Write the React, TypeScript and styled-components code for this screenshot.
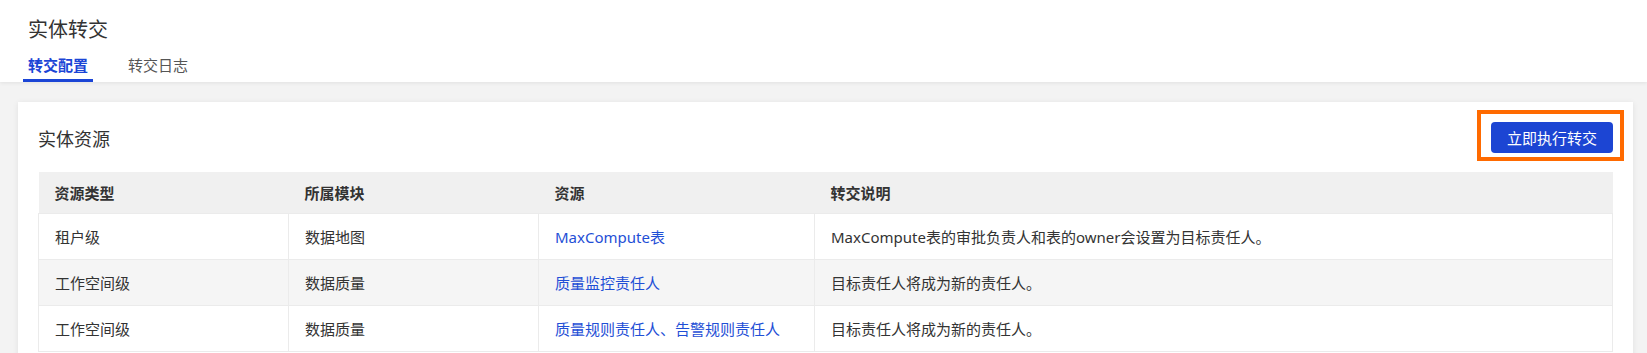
import React from "react";
import styled, { createGlobalStyle } from "styled-components";

const GlobalStyle = createGlobalStyle`
  html, body {
    margin: 0;
    padding: 0;
    background: #f3f3f3;
    font-family: "Noto Sans", "Noto Sans CJK SC", sans-serif;
    color: #333;
  }
`;

const PageHeader = styled.div`
  background: #fff;
  padding: 16px 0 0 23px;
  box-shadow: 0 1px 4px rgba(0, 0, 0, 0.08);
  position: relative;
  z-index: 1;
`;

const PageTitle = styled.div`
  font-size: 20px;
  line-height: 28px;
  padding-left: 5px;
  color: #333;
`;

const Tabs = styled.div`
  display: flex;
  gap: 30px;
`;

const Tab = styled.div<{ $active?: boolean }>`
  padding: 10px 5px 3px;
  font-size: 15px;
  line-height: 22px;
  font-weight: ${(p) => (p.$active ? 600 : 400)};
  color: ${(p) => (p.$active ? "#1b45d6" : "#555")};
  border-bottom: 3px solid ${(p) => (p.$active ? "#1b45d6" : "transparent")};
  cursor: pointer;
`;

const Main = styled.div`
  padding: 20px 14px 0 18px;
`;

const Card = styled.div`
  background: #fff;
  padding: 20px;
  box-shadow: 0 1px 6px rgba(0, 0, 0, 0.08);
`;

const CardHead = styled.div`
  display: flex;
  align-items: center;
  justify-content: space-between;
  height: 31px;
  margin-bottom: 19px;
`;

const CardTitle = styled.div`
  font-size: 18px;
  color: #333;
`;

const ButtonWrap = styled.div`
  position: relative;
`;

// orange annotation frame drawn over the button
const Highlight = styled.div`
  position: absolute;
  left: -14px;
  right: -11px;
  top: -12px;
  bottom: -8px;
  border: 4px solid #ff6a00;
  pointer-events: none;
`;

const PrimaryButton = styled.button`
  display: block;
  width: 122px;
  height: 31px;
  border: none;
  border-radius: 4px;
  background: #1c45d3;
  color: #fff;
  font-family: inherit;
  font-size: 15px;
  cursor: pointer;
`;

const Table = styled.table`
  width: 100%;
  border-collapse: collapse;
  table-layout: fixed;
  font-size: 15px;
`;

const Th = styled.th`
  height: 41px;
  padding: 0 16px;
  text-align: left;
  font-weight: 700;
  color: #333;
  background: #f0f0f0;
`;

const Row = styled.tr<{ $striped?: boolean }>`
  background: ${(p) => (p.$striped ? "#f5f5f5" : "#fff")};
`;

const Td = styled.td`
  height: 45px;
  padding: 0 16px;
  border: 1px solid #ebebeb;
  color: #333;
`;

const Link = styled.a`
  color: #1f4fd6;
  text-decoration: none;
  cursor: pointer;
`;

const rows = [
  {
    type: "租户级",
    module: "数据地图",
    resource: "MaxCompute表",
    desc: "MaxCompute表的审批负责人和表的owner会设置为目标责任人。",
  },
  {
    type: "工作空间级",
    module: "数据质量",
    resource: "质量监控责任人",
    desc: "目标责任人将成为新的责任人。",
  },
  {
    type: "工作空间级",
    module: "数据质量",
    resource: "质量规则责任人、告警规则责任人",
    desc: "目标责任人将成为新的责任人。",
  },
];

export default function App() {
  return (
    <>
      <GlobalStyle />
      <PageHeader>
        <PageTitle>实体转交</PageTitle>
        <Tabs>
          <Tab $active>转交配置</Tab>
          <Tab>转交日志</Tab>
        </Tabs>
      </PageHeader>
      <Main>
        <Card>
          <CardHead>
            <CardTitle>实体资源</CardTitle>
            <ButtonWrap>
              <PrimaryButton>立即执行转交</PrimaryButton>
              <Highlight />
            </ButtonWrap>
          </CardHead>
          <Table>
            <colgroup>
              <col style={{ width: 250 }} />
              <col style={{ width: 250 }} />
              <col style={{ width: 276 }} />
              <col />
            </colgroup>
            <thead>
              <tr>
                <Th>资源类型</Th>
                <Th>所属模块</Th>
                <Th>资源</Th>
                <Th>转交说明</Th>
              </tr>
            </thead>
            <tbody>
              {rows.map((r, i) => (
                <Row key={i} $striped={i % 2 === 1}>
                  <Td>{r.type}</Td>
                  <Td>{r.module}</Td>
                  <Td>
                    <Link>{r.resource}</Link>
                  </Td>
                  <Td>{r.desc}</Td>
                </Row>
              ))}
            </tbody>
          </Table>
        </Card>
      </Main>
    </>
  );
}
